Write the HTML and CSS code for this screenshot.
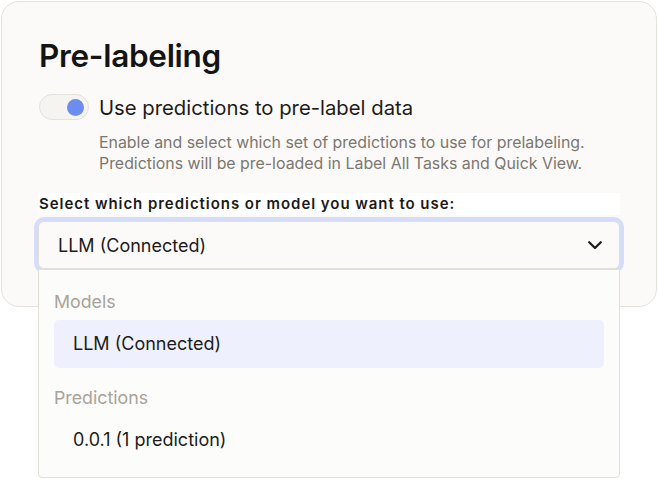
FILE: index.html
```html
<!DOCTYPE html>
<html>
<head>
<meta charset="utf-8">
<link rel="stylesheet" href="styles.css">
</head>
<body>
<div class="page">
  <section class="card">
    <h1 class="title">Pre-labeling</h1>
    <div class="toggle-row">
      <span class="toggle"><span class="knob"></span></span>
      <span class="toggle-label">Use predictions to pre-label data</span>
    </div>
    <p class="desc">Enable and select which set of predictions to use for prelabeling.<br>Predictions will be pre-loaded in Label All Tasks and Quick View.</p>
    <div class="field">
      <div class="field-label">Select which predictions or model you want to use:</div>
      <div class="select">
        <span class="select-value">LLM (Connected)</span>
        <svg class="chevron" width="14" height="9" viewBox="0 0 14 9"><path d="M1.2 1.2 L7 7 L12.8 1.2" fill="none" stroke="#1b1a18" stroke-width="2.2" stroke-linecap="round" stroke-linejoin="round"/></svg>
      </div>
      <div class="menu">
        <div class="group-label">Models</div>
        <div class="option active">LLM (Connected)</div>
        <div class="group-label second">Predictions</div>
        <div class="option">0.0.1 (1 prediction)</div>
      </div>
    </div>
  </section>
</div>
</body>
</html>
```

FILE: styles.css
```css
html, body {
  margin: 0;
  padding: 0;
  background: #ffffff;
}
html {
  height: 100%;
}
body {
  min-height: 100%;
  font-family: Inter, "Noto Sans", sans-serif;
  color: #1d1c1a;
}
.page {
  padding: 1px;
  min-height: 479px;
  box-sizing: border-box;
}
.card {
  width: 656px;
  box-sizing: border-box;
  border: 1px solid #e5e2dc;
  border-radius: 18px;
  background: #fbfaf8;
  padding: 34px 37px 37px 37px;
}
.title {
  margin: 0;
  font-size: 31.5px;
  line-height: 40px;
  font-weight: 600;
  color: #141413;
  letter-spacing: -0.3px;
}
.toggle-row {
  margin-top: 16px;
  height: 30px;
  display: flex;
  align-items: center;
  gap: 10px;
}
.toggle {
  width: 50px;
  height: 26px;
  box-sizing: border-box;
  border: 1.5px solid #e4e1db;
  border-radius: 13px;
  background: #f6f4f0;
  display: flex;
  align-items: center;
  justify-content: flex-end;
  padding-right: 4px;
}
.knob {
  width: 17px;
  height: 17px;
  border-radius: 50%;
  background: #6b8df2;
}
.toggle-label {
  font-size: 20.3px;
  color: #1d1c1a;
}
.desc {
  margin: 10px 0 0 60px;
  font-size: 15.9px;
  line-height: 21px;
  color: #7b7770;
}
.field {
  margin: 19px 0 0 -1px;
  width: 582px;
  position: relative;
}
.field-label {
  background: #ffffff;
  height: 22px;
  line-height: 22px;
  font-size: 15px;
  font-weight: 600;
  letter-spacing: 0.95px;
  color: #1b1a18;
  padding-left: 1px;
  margin-bottom: 6px;
  white-space: nowrap;
}
.select {
  height: 48px;
  box-sizing: border-box;
  border: 1px solid #e2dfd8;
  border-radius: 6px;
  background: #fbfaf8;
  box-shadow: 0 0 0 4px #d6ddf9;
  display: flex;
  align-items: center;
  justify-content: space-between;
  padding: 0 17px 0 19px;
}
.select-value {
  font-size: 18px;
  color: #1d1c1a;
  padding-top: 1px;
}
.menu {
  position: absolute;
  left: 0;
  right: 0;
  top: 76px;
  box-sizing: border-box;
  border: 1px solid #e2dfd8;
  border-radius: 0 0 4px 4px;
  background: #fcfcfa;
  padding: 18px 15px 13px 15px;
}
.group-label {
  height: 28px;
  line-height: 28px;
  font-size: 17.8px;
  color: #a8a39b;
  margin-bottom: 4px;
}
.group-label.second {
  margin-top: 16px;
}
.option {
  height: 48px;
  line-height: 48px;
  padding-left: 19px;
  border-radius: 5px;
  font-size: 18px;
  color: #1d1c1a;
}
.option.active {
  background: #eef1fd;
}
```
